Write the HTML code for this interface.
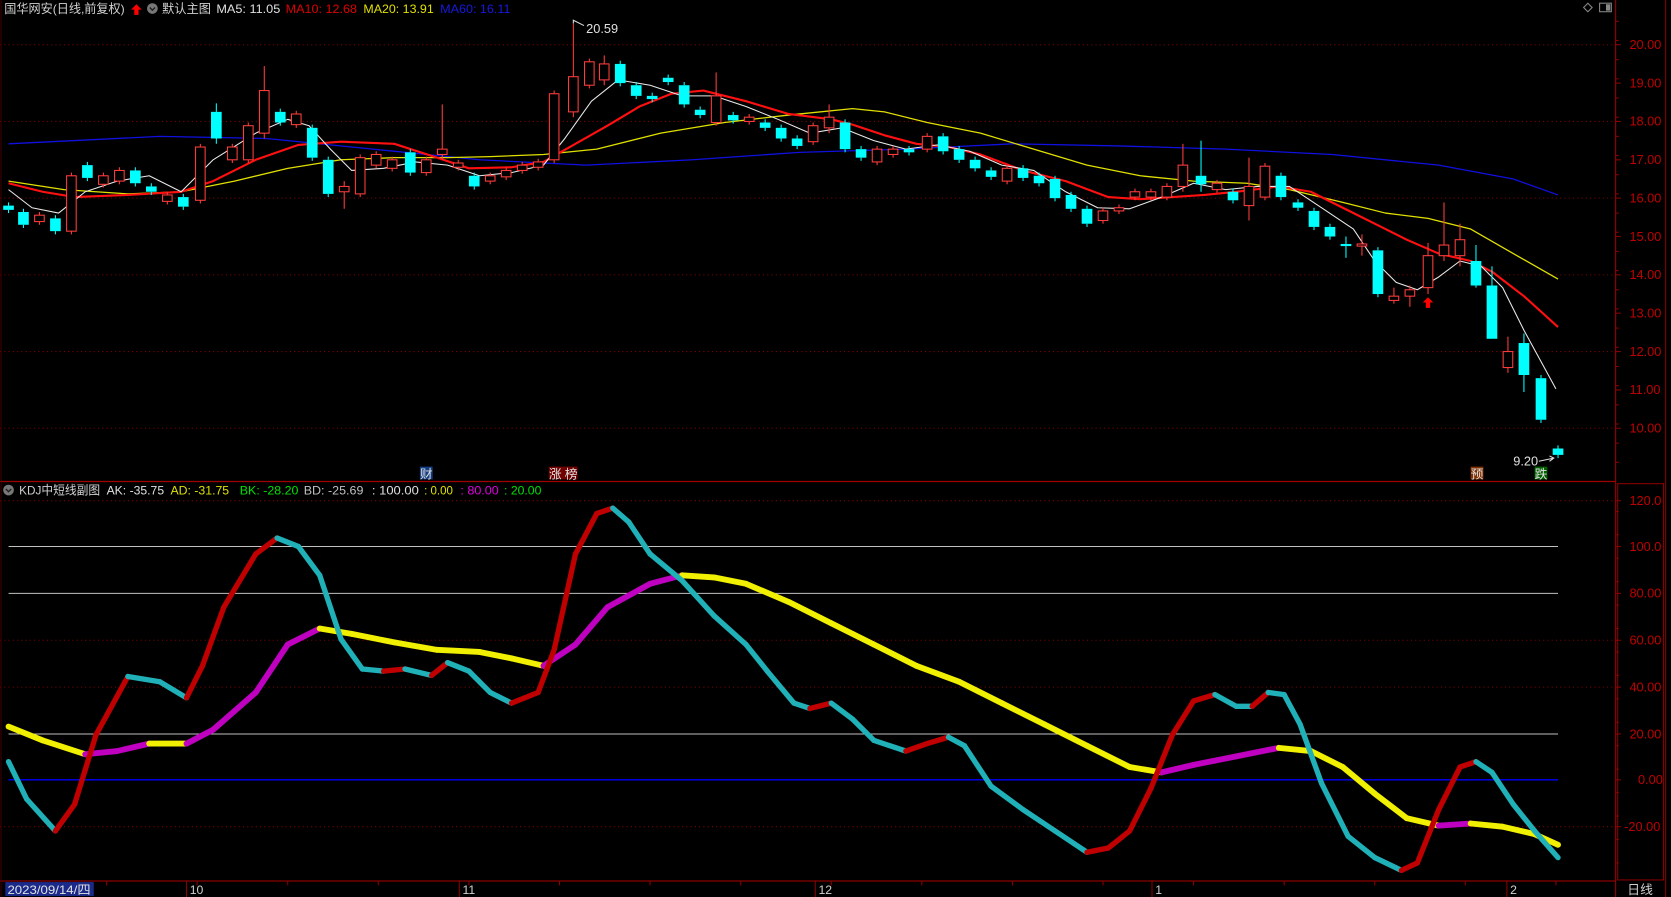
<!DOCTYPE html>
<html><head><meta charset="utf-8"><style>
html,body{margin:0;padding:0;background:#000;overflow:hidden}
svg{display:block}
text{font-family:"Liberation Sans","Noto Sans CJK SC",sans-serif}
</style></head><body>
<svg id="s" width="1671" height="897" viewBox="0 0 1568 842" preserveAspectRatio="none" xmlns="http://www.w3.org/2000/svg">
<rect width="1568" height="842" fill="#000"/>
<g id="grid"></g>
<g id="lines"></g>
<g id="cand"></g>
<g id="kdj"></g>
<g id="txt"></g>
</svg>
<script>
const NS="http://www.w3.org/2000/svg";
function el(p,t,a,txt){const e=document.createElementNS(NS,t);for(const k in a)e.setAttribute(k,a[k]);if(txt!=null)e.textContent=txt;document.getElementById(p).appendChild(e);return e;}
const R="#8b0000";
[42,114,186,258,330,402,470,601,645,776].forEach(y=>el("grid","line",{x1:0,x2:1516,y1:y,y2:y,stroke:"#800000","stroke-dasharray":"1 3","stroke-width":1}));
[513,557,689].forEach(y=>el("grid","line",{x1:8,x2:1462,y1:y,y2:y,stroke:"#c0c0c0","stroke-width":1}));
el("grid","line",{x1:8,x2:1462,y1:732,y2:732,stroke:"#0000ff","stroke-width":1.2});
el("grid","line",{x1:0,x2:1516,y1:452,y2:452,stroke:"#a00000","stroke-width":1.2});
el("grid","line",{x1:1516,x2:1516,y1:0,y2:842,stroke:R,"stroke-width":1.2});
el("grid","line",{x1:1563,x2:1563,y1:0,y2:842,stroke:R,"stroke-width":1});
el("grid","rect",{x:1518,y:454,width:43,height:372,fill:"none",stroke:R,"stroke-width":1});
el("grid","line",{x1:0,x2:1516,y1:827,y2:827,stroke:R,"stroke-width":1.2});
el("grid","line",{x1:1,x2:1,y1:0,y2:842,stroke:"#400000","stroke-width":1});
const pl=[["20.00",42],["19.00",78],["18.00",114],["17.00",150],["16.00",186],["15.00",222],["14.00",258],["13.00",294],["12.00",330],["11.00",366],["10.00",402]];
pl.forEach(([t,y])=>{el("grid","line",{x1:1516,x2:1521,y1:y,y2:y,stroke:R});el("txt","text",{x:1529,y:y+4,fill:"#c00000","font-size":12},t);});
[[ "120.0",470],["100.0",513],["80.00",557],["60.00",601],["40.00",645],["20.00",689],["0.00",732],["-20.00",776]].forEach(([t,y])=>{el("grid","line",{x1:1516,x2:1521,y1:y,y2:y,stroke:R});el("txt","text",{x:t=="0.00"?1537:(t=="-20.00"?1524:1529),y:y+4,fill:"#c00000","font-size":12},t);});
for(let y=20;y<452;y+=18)el("grid","line",{x1:1516,x2:1519,y1:y,y2:y,stroke:R});
for(let y=480;y<827;y+=22)el("grid","line",{x1:1516,x2:1519,y1:y,y2:y,stroke:R});
function poly(pts,c,w){el("lines","polyline",{points:pts.map(p=>p.join(",")).join(" "),fill:"none",stroke:c,"stroke-width":w,"stroke-linejoin":"round"});}
poly([[8,135],[150,128],[250,130],[350,140],[450,150],[550,155],[650,150],[750,143],[850,140],[950,135],[1050,137],[1150,140],[1250,145],[1350,155],[1420,168],[1462,183]],"#1010e0",1.2);
poly([[8,170],[60,178],[120,182],[170,180],[220,170],[270,158],[320,150],[370,148],[420,148],[460,147],[510,145],[560,140],[620,125],[680,115],[740,108],[800,102],[830,105],[870,115],[920,125],[970,140],[1020,155],[1070,165],[1120,170],[1170,172],[1210,178],[1260,190],[1300,200],[1340,205],[1380,215],[1420,238],[1462,262]],"#e0e000",1.2);
poly([[8,172],[40,180],[70,185],[120,183],[170,180],[200,170],[240,150],[280,136],[320,133],[370,135],[410,148],[440,158],[480,157],[510,152],[540,135],[570,118],[600,100],[630,88],[660,85],[700,95],[740,107],[780,112],[800,117],[830,127],[860,135],[890,138],[920,145],[960,160],[1000,170],[1040,185],[1070,187],[1100,185],[1130,183],[1160,180],[1200,175],[1230,180],[1260,195],[1290,210],[1320,225],[1350,238],[1380,245],[1400,255],[1430,278],[1462,307]],"#ff1010",2);
poly([[8,178],[30,195],[55,200],[80,180],[110,170],[140,165],[170,180],[200,150],[240,125],[270,112],[290,118],[310,140],[330,160],[360,158],[390,152],[420,155],[450,165],[480,162],[510,155],[530,130],[555,95],[580,75],[610,80],[640,90],[670,90],[700,100],[730,112],[760,125],[790,120],[820,132],[850,140],[880,136],[910,142],[940,155],[970,160],[1000,180],[1030,195],[1060,196],[1090,185],[1120,172],[1150,178],[1180,175],[1210,175],[1240,195],[1270,215],[1290,245],[1310,265],[1330,272],[1350,260],[1370,245],[1390,250],[1410,270],[1430,310],[1460,365]],"#e8e8e8",1);
const C=[[8,193,197,0],[22,199,211,0],[37,202,208,1],[52,205,217,0],[67,165,217,1],[82,155,167,0],[97,165,173,1],[112,160,170,1],[127,160,172,0],[142,175,180,0],[157,183,189,1],[172,185,194,0],[188,138,188,1],[203,105,130,0,97,135],[218,138,150,1],[233,118,150,1],[248,85,125,1,62,130],[263,105,115,0],[278,107,117,1],[293,120,148,0],[308,150,182,0],[323,175,180,1,170,196],[338,148,182,1],[353,145,155,1],[368,150,158,1],[385,143,162,0],[400,150,162,1],[415,140,145,1,98,150],[430,153,157,1],[445,165,175,0],[460,165,170,1],[475,160,166,1],[490,155,160,1],[505,152,157,1],[520,88,150,1],[538,72,105,1,22,110],[553,58,80,1],[567,60,75,1,52,80],[582,60,78,0],[597,80,90,0],[612,90,93,0],[627,73,77,0],[642,80,98,0],[657,103,108,0],[672,90,115,1,68,118],[688,108,113,0],[703,110,114,1],[718,115,120,0],[733,120,130,0],[748,130,137,0],[763,118,133,1],[778,110,120,1,98,125],[793,115,140,0],[808,140,148,0],[823,140,152,1],[838,140,145,1],[853,140,143,0],[870,128,140,1],[885,128,142,0],[900,140,150,0],[915,150,158,0],[930,160,166,0],[945,158,170,1],[960,158,167,0],[975,165,172,0],[990,168,186,0],[1005,183,196,0],[1020,196,210,0],[1035,198,207,1],[1050,195,198,1],[1065,180,185,1],[1080,180,185,1],[1095,175,185,1],[1110,155,175,1,135,180],[1127,165,173,0,132,180],[1142,172,178,1],[1157,180,188,0],[1172,175,193,1,148,207],[1187,156,185,1],[1202,165,185,0],[1218,190,195,0],[1233,198,213,0],[1248,213,222,0],[1263,229,231,0,222,242],[1278,229,231,1,220,240],[1293,235,276,0],[1308,278,282,1,270,285],[1323,272,278,1,268,288],[1340,240,270,1,228,276],[1355,230,240,1,190,245],[1370,225,240,1,210,250],[1385,245,268,0,230,270],[1400,268,318,0,250,318],[1415,330,345,1,316,350],[1430,322,352,0,313,368],[1446,355,394,0],[1462,421,427,0]];
C.forEach(c=>{const [x,t,b,u,h,l]=c;const col=u?"#ff3c3c":"#00ffff";const hi=h||t-3,lo=l||b+3;
el("cand","line",{x1:x,x2:x,y1:hi,y2:t,stroke:col});el("cand","line",{x1:x,x2:x,y1:b,y2:lo,stroke:col});
if(u)el("cand","rect",{x:x-4.5,y:t,width:9,height:Math.max(b-t,1),fill:"#000",stroke:col,"stroke-width":1});
else el("cand","rect",{x:x-5,y:t,width:10,height:Math.max(b-t,2),fill:col});});
function rib(pts,up,dn,w){for(let i=0;i<pts.length-1;i++){const a=pts[i],b=pts[i+1];el("kdj","line",{x1:a[0],y1:a[1],x2:b[0],y2:b[1],stroke:b[1]<a[1]?up:dn,"stroke-width":w,"stroke-linecap":"round"});}}
rib([[8,682],[40,695],[80,708],[110,705],[140,698],[175,698],[200,685],[240,650],[270,605],[300,590],[330,595],[370,603],[410,610],[450,612],[480,618],[510,625],[540,605],[570,570],[610,548],[640,540],[670,542],[700,548],[740,565],[780,585],[820,605],[860,625],[900,640],[940,660],[980,680],[1020,700],[1060,720],[1090,725],[1120,718],[1160,710],[1200,702],[1230,705],[1260,720],[1290,745],[1320,768],[1350,775],[1380,773],[1410,776],[1440,783],[1462,793]],"#c000c0","#f0f000",5.5);
rib([[8,715],[25,750],[52,780],[70,755],[90,690],[120,635],[150,640],[175,655],[190,625],[210,570],[240,520],[260,505],[280,513],[300,540],[320,600],[340,628],[360,630],[380,628],[405,634],[420,622],[440,630],[460,650],[480,660],[505,650],[520,610],[540,520],[560,482],[575,477],[590,490],[610,520],[640,545],[670,578],[700,605],[720,630],[745,660],[760,665],[780,660],[800,675],[820,695],[850,705],[870,698],[890,692],[905,700],[930,738],[960,760],[990,780],[1020,800],[1040,796],[1060,780],[1080,740],[1100,690],[1120,658],[1140,652],[1160,663],[1175,663],[1190,650],[1205,652],[1220,680],[1240,735],[1265,785],[1290,805],[1315,817],[1330,810],[1350,760],[1370,720],[1385,715],[1400,725],[1420,755],[1440,780],[1462,805]],"#c00000","#20b0b8",5);
function T(x,y,c,tl,t,sz){const a={x:x,y:y,fill:c,"font-size":sz||11.5};if(tl){a.textLength=tl;a.lengthAdjust="spacingAndGlyphs";}el("txt","text",a,t);}
T(4,12,"#d0d0d0",113,"国华网安(日线,前复权)");
el("txt","path",{d:"M128 4 L133 9 L130 9 L130 14 L126 14 L126 9 L123 9 Z",fill:"#ff0000"});
el("txt","circle",{cx:143,cy:8,r:5,fill:"#777"});
el("txt","path",{d:"M140.5 7 L143 9.5 L145.5 7",fill:"none",stroke:"#222","stroke-width":1.3});
T(152,12,"#d0d0d0",46,"默认主图");
T(203,12,"#e0e0e0",60,"MA5: 11.05");
T(268,12,"#e00000",67,"MA10: 12.68");
T(341,12,"#e0e000",66,"MA20: 13.91");
T(413,12,"#1818e0",66,"MA60: 16.11");
el("txt","circle",{cx:8,cy:460,r:5,fill:"#777"});
el("txt","path",{d:"M5.5 459 L8 461.5 L10.5 459",fill:"none",stroke:"#222","stroke-width":1.3});
T(18,464,"#d0d0d0",76,"KDJ中短线副图");
T(100,464,"#e0e0e0",54,"AK: -35.75");
T(160,464,"#e0e000",55,"AD: -31.75");
T(225,464,"#00e000",55,"BK: -28.20");
T(285,464,"#c0c0c0",56,"BD: -25.69");
T(349,464,"#e0e0e0",44,": 100.00");
T(398,464,"#e0e000",27,": 0.00");
T(432,464,"#e000e0",36,": 80.00");
T(473,464,"#00e000",35,": 20.00");
T(550,31,"#e0e0e0",0,"20.59",12);
el("txt","path",{d:"M538 22 L538 19 L548 24",fill:"none",stroke:"#ddd"});
T(1420,437,"#e0e0e0",0,"9.20",12);
el("txt","path",{d:"M1444 433 L1458 430 M1454 428 L1458 430 L1454 433",fill:"none",stroke:"#ddd"});
el("txt","path",{d:"M1340 279 L1345 284 L1342 284 L1342 289 L1338 289 L1338 284 L1335 284 Z",fill:"#ff0000"});
el("txt","rect",{x:394,y:438,width:12,height:12,fill:"#143c80"});T(394,449,"#e0e0e0",0,"财",12);
el("txt","rect",{x:515,y:438,width:27,height:12,fill:"#700000"});T(515,449,"#e0e0e0",0,"涨",12);T(530,449,"#e0e0e0",0,"榜",12);
el("txt","rect",{x:1380,y:438,width:12,height:12,fill:"#803000"});T(1380,449,"#e0e0e0",0,"预",12);
el("txt","rect",{x:1440,y:438,width:12,height:12,fill:"#006000"});T(1440,449,"#e0e0e0",0,"跌",12);
el("txt","path",{d:"M1490 3 L1494 7 L1490 11 L1486 7 Z",fill:"none",stroke:"#888"});
el("txt","rect",{x:1501,y:3,width:11,height:8,fill:"none",stroke:"#888"});
el("txt","rect",{x:1507,y:4,width:4,height:6,fill:"#888"});
el("txt","rect",{x:5,y:828,width:83,height:13,fill:"#1a2a8a"});
T(7,839,"#e0e0e0",78,"2023/09/14/四");
[[175,"10"],[431,"11"],[765,"12"],[1081,"1"],[1414,"2"]].forEach(([x,t])=>{el("txt","line",{x1:x,x2:x,y1:827,y2:842,stroke:R});T(x+3,839,"#d0d0d0",0,t);});
for(let x=100;x<1516;x+=85)el("txt","line",{x1:x,x2:x,y1:827,y2:831,stroke:R});
T(1527,839,"#d0d0d0",0,"日线",12);
</script>
</body></html>
